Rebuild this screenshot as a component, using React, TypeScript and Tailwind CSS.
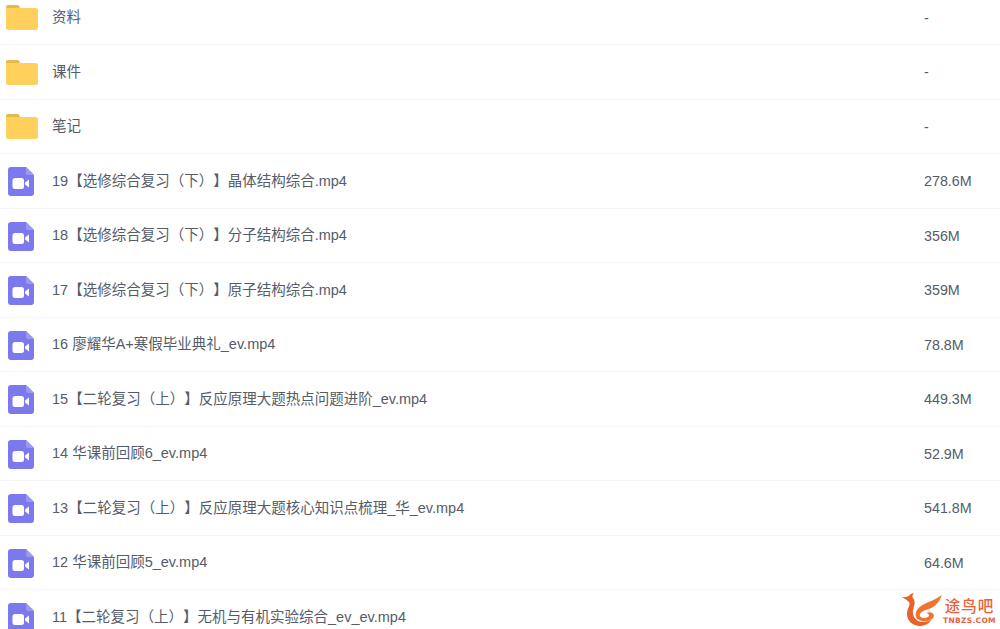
const rows: [string, string, boolean][] = [
  ["资料", "-", true],
  ["课件", "-", true],
  ["笔记", "-", true],
  ["19【选修综合复习（下）】晶体结构综合.mp4", "278.6M", false],
  ["18【选修综合复习（下）】分子结构综合.mp4", "356M", false],
  ["17【选修综合复习（下）】原子结构综合.mp4", "359M", false],
  ["16 廖耀华A+寒假毕业典礼_ev.mp4", "78.8M", false],
  ["15【二轮复习（上）】反应原理大题热点问题进阶_ev.mp4", "449.3M", false],
  ["14 华课前回顾6_ev.mp4", "52.9M", false],
  ["13【二轮复习（上）】反应原理大题核心知识点梳理_华_ev.mp4", "541.8M", false],
  ["12 华课前回顾5_ev.mp4", "64.6M", false],
  ["11【二轮复习（上）】无机与有机实验综合_ev_ev.mp4", "", false],
];

function Folder() {
  return (
    <svg width="32" height="26" viewBox="0 0 32 26" className="block">
      <path d="M0 3a2 2 0 0 1 2-2h9c1.500 0 2.500 1 3 3H0z" fill="#e5b94f" />
      <path d="M0 4h29.500A2.500 2.500 0 0 1 32 6.500V23.500A2.500 2.500 0 0 1 29.500 26H2.500A2.500 2.500 0 0 1 0 23.500z" fill="#ffd05c" />
    </svg>
  );
}

function Video() {
  return (
    <svg width="26" height="29" viewBox="0 0 26 29" className="block">
      <path d="M3 0H18L26 8V26a3 3 0 0 1-3 3H3a3 3 0 0 1-3-3V3a3 3 0 0 1 3-3z" fill="#7c79ee" />
      <path d="M18 0L26 8H20a2 2 0 0 1-2-2z" fill="#9b98f4" />
      <rect x="4.500" y="11" width="11.500" height="11" rx="2.500" fill="#fff" />
      <path d="M17 15.500L21 12.500V20.500L17 17.500z" fill="#fff" />
    </svg>
  );
}

export default function App() {
  return (
    <div className="relative h-[629px] w-[1000px] overflow-hidden bg-white font-['Liberation_Sans','Noto_Sans_CJK_SC',sans-serif] text-[14.5px] text-[#555c68] [text-spacing-trim:space-all]">
      <div className="-mt-[9.500px] flex flex-col">
        {rows.map(([name, size, folder]) => (
          <div key={name} className="flex h-[54.5px] items-center border-b border-[#f5f6f7]">
            <div className="flex w-[52px] justify-start pl-[6px]">
              {folder ? <Folder /> : <div className="pl-[2px] pt-[2px]"><Video /></div>}
            </div>
            <div className="flex-1 whitespace-nowrap pt-[2px]">{name}</div>
            <div className="w-[76px] pt-[2px] text-[14.3px]">{size}</div>
          </div>
        ))}
      </div>
      <div className="absolute left-[901px] top-[593px] flex items-start gap-[1px]">
        <svg width="41" height="33" viewBox="0 0 41 33" className="block">
          <path d="M1 4C4 4 6 4 8 3C9 1 11 0 13 1C11 2 11 3 12 5C15 9 13 13 12 17C11 23 15 29 22 29C26 29 29 28 31 26C28 31 23 33 19 33C12 33 6 28 6 21C6 15 10 12 8 9C6 7 4 6 1 4z" fill="#e8622a" />
          <path d="M41 2C38 10 33 15 25 17C20 18.500 18 21 19 23C20 25.500 25 26 28 23C28 21 27 20 25 20C29 18 33 20 33 23C32 27 26 29 21 28C15 27 13 22 16 17C20 10 32 9 41 2z" fill="#ef7433" />
        </svg>
        <div className="mt-[6px] flex flex-col items-center leading-none text-[#e8623a]">
          <span className="text-[15.5px] font-medium tracking-[1px]">途鸟吧</span>
          <span className="mt-[2px] font-['DejaVu_Sans'] text-[7.5px] font-bold tracking-[0.300px]">TNBZS.COM</span>
        </div>
      </div>
    </div>
  );
}
